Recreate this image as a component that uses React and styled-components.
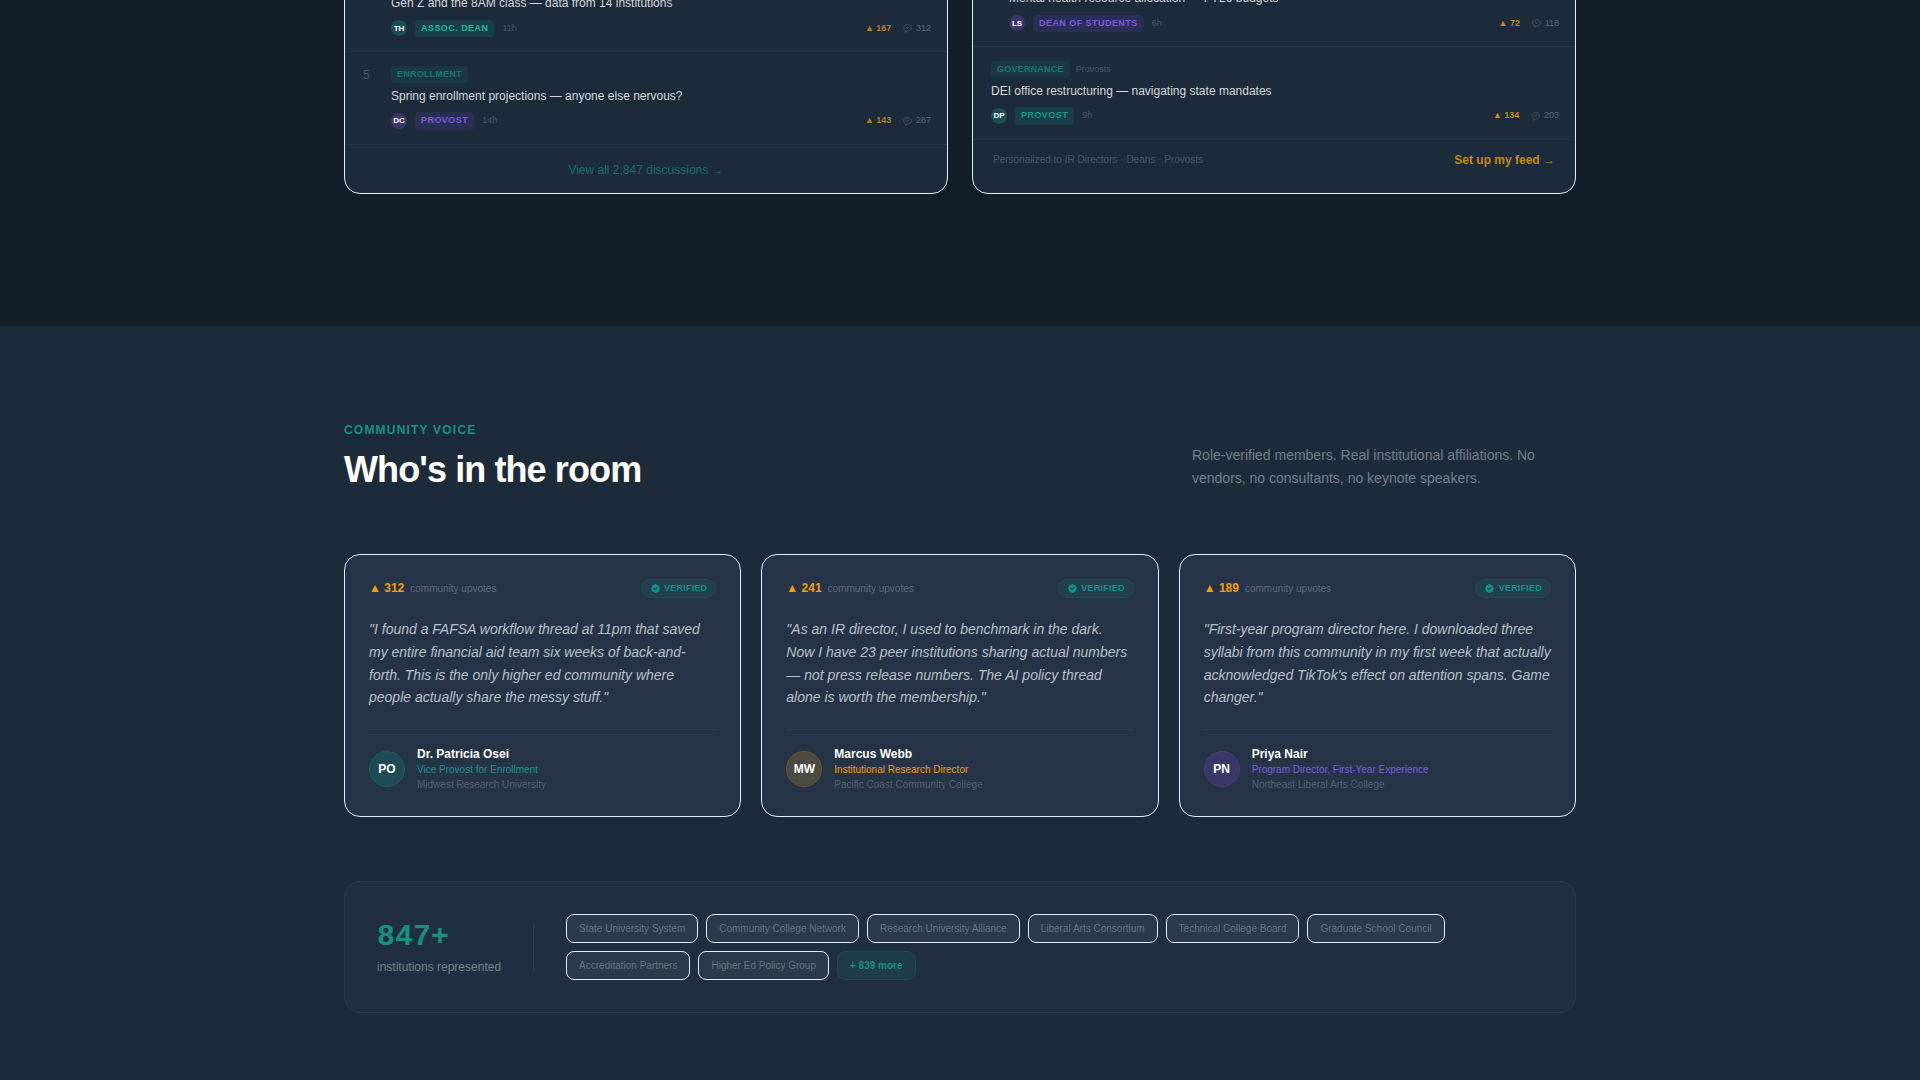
import React from 'react';
import styled, { createGlobalStyle } from 'styled-components';
import { HiBadgeCheck } from 'react-icons/hi';

const GlobalStyle = createGlobalStyle`
  * {
    box-sizing: border-box;
  }

  body {
    margin: 0;
    background: #1c2b39;
    font-family: 'Liberation Sans', Arial, sans-serif;
    color: #fff;
    overflow: hidden;
  }

  p, h2 {
    margin: 0;
  }
`;

const tones = {
  teal: {
    text: '#14988a',
    bright: '#1fb5a0',
    tag: 'rgba(13, 148, 136, 0.19)',
    avatar: '#1d4d55',
    large: '#1e4a55',
    ring: '#1f5c60',
  },
  amber: {
    text: '#f59e0b',
    large: '#4a4a3f',
    ring: '#705628',
  },
  purple: {
    text: '#7c5ce0',
    bright: '#8059e0',
    tag: 'rgba(110, 65, 225, 0.16)',
    avatar: '#3b356b',
    large: '#383765',
    ring: '#453b80',
  },
};

const Page = styled.div`
  height: 1080px;
  overflow: hidden;
`;

const Container = styled.div`
  width: 1232px;
  margin: 0 auto;
`;

const FeedSection = styled.section`
  height: 325.6px;
  background: #111d28;
  overflow: hidden;
`;

const Boards = styled(Container)`
  display: grid;
  grid-template-columns: 1fr 1fr;
  gap: 24px;
  height: 224px;
  margin-top: -30px;
`;

const Board = styled.div`
  display: flex;
  flex-direction: column;
  padding-top: ${({ $top }) => $top}px;
  background: #1c2b39;
  border: 1px solid #e2ecf6;
  border-radius: 16px;
`;

const Row = styled.div`
  display: flex;
  padding: 14px 16px 14px ${({ $indent }) => $indent || 16}px;
  border-bottom: 1px solid #253644;
`;

const Rank = styled.span`
  width: 30px;
  padding-left: 2px;
  font-size: 12px;
  line-height: 18px;
  color: #4a5a68;
`;

const RowBody = styled.div`
  flex: 1;
`;

const TagLine = styled.div`
  display: flex;
  align-items: center;
  gap: 6px;
  height: 17px;
  margin-bottom: 4.5px;
`;

const Topic = styled.span`
  padding: 2px 6px;
  border-radius: 4px;
  background: rgba(13, 148, 136, 0.13);
  color: #16796f;
  font-size: 9px;
  font-weight: 700;
  line-height: 13.5px;
  letter-spacing: 0.025em;
`;

const Muted = styled.span`
  font-size: 9px;
  line-height: 13.5px;
  color: #4b5964;
`;

const RowTitle = styled.p`
  font-size: 12px;
  line-height: 17px;
  margin-bottom: ${({ $tagged }) => ($tagged ? 7.5 : 8)}px;
  color: #d3d8dc;
`;

const Meta = styled.div`
  display: flex;
  align-items: center;
  gap: 8px;
  height: 17.5px;
`;

const SmallAvatar = styled.span`
  display: flex;
  align-items: center;
  justify-content: center;
  width: 16px;
  height: 16px;
  border-radius: 50%;
  background: ${({ $tone }) => tones[$tone].avatar};
  font-size: 8px;
  font-weight: 700;
`;

const Role = styled.span`
  padding: 2px 6px;
  border-radius: 4px;
  background: ${({ $tone }) => tones[$tone].tag};
  color: ${({ $tone, $bright }) => ($bright ? tones[$tone].bright : tones[$tone].text)};
  font-size: 9px;
  font-weight: 700;
  line-height: 13.5px;
  letter-spacing: 0.05em;
`;

const Stats = styled.div`
  display: flex;
  gap: 12px;
  margin-left: auto;
  font-size: 9px;
  line-height: 13.5px;
`;

const Votes = styled.span`
  font-weight: 700;
  color: ${({ $dim }) => ($dim ? '#b08029' : '#c48a1a')};
`;

const Comments = styled.span`
  display: flex;
  align-items: center;
  gap: 3.6px;
  color: #5a6976;
`;

const Bubble = styled.svg`
  width: 9px;
  height: 9px;
  margin-top: 1px;
  fill: none;
  stroke: #4a5965;
  stroke-width: 0.8;
`;

const BoardFooter = styled.div`
  display: flex;
  align-items: center;
  justify-content: ${({ $split }) => ($split ? 'space-between' : 'center')};
  height: ${({ $split }) => ($split ? 41 : 48.5)}px;
  padding: ${({ $split }) => ($split ? 0 : 2)}px 20px 0;
  font-size: 12px;
`;

const ViewAll = styled.span`
  color: #177168;
`;

const FooterNote = styled.span`
  font-size: 10px;
  line-height: 10px;
  color: #4a5863;
`;

const SetUp = styled.span`
  font-weight: 700;
  color: #c48a14;
`;

const VoiceSection = styled.section`
  padding-top: 96px;
`;

const Header = styled.div`
  display: flex;
  align-items: flex-end;
  justify-content: space-between;
  margin-bottom: 64px;
`;

const Eyebrow = styled.p`
  margin-bottom: 12px;
  font-size: 12px;
  line-height: 16px;
  font-weight: 700;
  letter-spacing: 0.1em;
  color: #179282;
`;

const Heading = styled.h2`
  font-size: 36px;
  line-height: 40px;
  font-weight: 700;
  letter-spacing: -0.025em;
`;

const Intro = styled.p`
  width: 384px;
  font-size: 14px;
  line-height: 22.75px;
  color: #74808a;
`;

const Cards = styled.div`
  display: grid;
  grid-template-columns: repeat(3, 1fr);
  gap: 20px;
  margin-bottom: 64px;
`;

const Card = styled.div`
  padding: 24px;
  background: #243446;
  border: 1px solid #e2ecf6;
  border-radius: 16px;
`;

const CardTop = styled.div`
  display: flex;
  align-items: center;
  gap: 6px;
  height: 19.5px;
  margin-bottom: 20px;
`;

const Upvotes = styled.span`
  font-size: 12px;
  font-weight: 700;
  color: #f59e0b;
`;

const UpvoteLabel = styled.span`
  font-size: 10px;
  color: #5f6d7c;
`;

const Verified = styled.span`
  display: flex;
  align-items: center;
  gap: 3.5px;
  margin-left: auto;
  padding: 2px 8px;
  border: 1px solid #204d4f;
  border-radius: 999px;
  background: #213f4d;
  color: #13948a;
  font-size: 9px;
  font-weight: 700;
  line-height: 13.5px;
  letter-spacing: 0.025em;
`;

const Quote = styled.p`
  margin-bottom: 20px;
  font-size: 14px;
  font-style: italic;
  line-height: 22.75px;
  color: #b9c0c7;
`;

const Author = styled.div`
  display: flex;
  align-items: center;
  gap: 12px;
  padding-top: 16.8px;
  border-top: 1px solid #2d3e50;
`;

const Avatar = styled.span`
  display: flex;
  align-items: center;
  justify-content: center;
  width: 36px;
  height: 36px;
  border: 1px solid ${({ $tone }) => tones[$tone].ring};
  border-radius: 50%;
  background: ${({ $tone }) => tones[$tone].large};
  font-size: 12px;
  font-weight: 700;
`;

const Name = styled.p`
  font-size: 12px;
  font-weight: 700;
  line-height: 15px;
`;

const JobTitle = styled.p`
  font-size: 10px;
  line-height: 15px;
  color: ${({ $tone }) => tones[$tone].text};
`;

const School = styled.p`
  font-size: 10px;
  line-height: 15px;
  color: #526170;
`;

const Strip = styled.div`
  display: flex;
  align-items: center;
  gap: 32px;
  padding: 32px;
  background: #1f2f3f;
  border: 1px solid #293a48;
  border-radius: 16px;
`;

const Count = styled.p`
  margin-bottom: 4px;
  font-family: 'Liberation Mono', monospace;
  font-size: 30px;
  font-weight: 700;
  line-height: 36px;
  color: #16917f;
`;

const CountLabel = styled.p`
  font-size: 12px;
  line-height: 16px;
  color: #77838d;
`;

const Divider = styled.div`
  width: 1px;
  height: 48px;
  background: #2b3c4b;
`;

const Chips = styled.div`
  display: flex;
  flex: 1;
  flex-wrap: wrap;
  gap: 8px;
`;

const Chip = styled.span`
  padding: 6px 12px;
  border: 1px solid ${({ $more }) => ($more ? '#1b4b50' : '#e2ecf6')};
  border-radius: 8px;
  background: ${({ $more }) => ($more ? '#1d3c47' : '#2a3a48')};
  color: ${({ $more }) => ($more ? '#159284' : '#687580')};
  font-size: 10px;
  font-weight: ${({ $more }) => ($more ? 700 : 400)};
  line-height: 15px;
`;

const trending = [
  {
    title: 'Gen Z and the 8AM class — data from 14 institutions',
    initials: 'TH',
    tone: 'teal',
    bright: true,
    role: 'ASSOC. DEAN',
    time: '11h',
    votes: 167,
    comments: 312,
  },
  {
    rank: 5,
    topic: 'ENROLLMENT',
    title: 'Spring enrollment projections — anyone else nervous?',
    initials: 'DC',
    tone: 'purple',
    role: 'PROVOST',
    time: '14h',
    votes: 143,
    comments: 287,
  },
];

const personal = [
  {
    title: 'Mental health resource allocation — FY26 budgets',
    initials: 'LS',
    tone: 'purple',
    bright: true,
    role: 'DEAN OF STUDENTS',
    time: '6h',
    votes: 72,
    comments: 118,
    indent: 36,
  },
  {
    topic: 'GOVERNANCE',
    audience: 'Provosts',
    title: 'DEI office restructuring — navigating state mandates',
    initials: 'DP',
    tone: 'teal',
    role: 'PROVOST',
    time: '9h',
    votes: 134,
    comments: 203,
    indent: 18,
  },
];

const testimonials = [
  {
    votes: 312,
    quote:
      '"I found a FAFSA workflow thread at 11pm that saved my entire financial aid team six weeks of back-and-forth. This is the only higher ed community where people actually share the messy stuff."',
    initials: 'PO',
    name: 'Dr. Patricia Osei',
    title: 'Vice Provost for Enrollment',
    school: 'Midwest Research University',
    tone: 'teal',
  },
  {
    votes: 241,
    quote:
      '"As an IR director, I used to benchmark in the dark. Now I have 23 peer institutions sharing actual numbers — not press release numbers. The AI policy thread alone is worth the membership."',
    initials: 'MW',
    name: 'Marcus Webb',
    title: 'Institutional Research Director',
    school: 'Pacific Coast Community College',
    tone: 'amber',
  },
  {
    votes: 189,
    quote:
      '"First-year program director here. I downloaded three syllabi from this community in my first week that actually acknowledged TikTok\'s effect on attention spans. Game changer."',
    initials: 'PN',
    name: 'Priya Nair',
    title: 'Program Director, First-Year Experience',
    school: 'Northeast Liberal Arts College',
    tone: 'purple',
  },
];

const institutions = [
  'State University System',
  'Community College Network',
  'Research University Alliance',
  'Liberal Arts Consortium',
  'Technical College Board',
  'Graduate School Council',
  'Accreditation Partners',
  'Higher Ed Policy Group',
];

const BubbleIcon = () => (
  <Bubble viewBox="0 0 9 9">
    <path d="M2.4 0.9H6.4L8.2 2.4V5.2L6.6 6.9H4.2L2.4 8.3V6.7L0.8 5.2V2.4Z" />
    <path d="M2.8 3.2H4.4M3.6 5.2L6.2 2.8" />
  </Bubble>
);

const FeedRow = ({ item, ranked }) => (
  <Row $indent={item.indent}>
    {ranked && <Rank>{item.rank}</Rank>}
    <RowBody>
      {item.topic && (
        <TagLine>
          <Topic>{item.topic}</Topic>
          {item.audience && <Muted>{item.audience}</Muted>}
        </TagLine>
      )}
      <RowTitle $tagged={!!item.topic}>{item.title}</RowTitle>
      <Meta>
        <SmallAvatar $tone={item.tone}>{item.initials}</SmallAvatar>
        <Role $tone={item.tone} $bright={item.bright}>{item.role}</Role>
        <Muted>{item.time}</Muted>
        <Stats>
          <Votes $dim={ranked}>▲ {item.votes}</Votes>
          <Comments>
            <BubbleIcon />
            {item.comments}
          </Comments>
        </Stats>
      </Meta>
    </RowBody>
  </Row>
);

const Testimonial = ({ item }) => (
  <Card>
    <CardTop>
      <Upvotes>▲ {item.votes}</Upvotes>
      <UpvoteLabel>community upvotes</UpvoteLabel>
      <Verified>
        <HiBadgeCheck size={11} />
        VERIFIED
      </Verified>
    </CardTop>
    <Quote>{item.quote}</Quote>
    <Author>
      <Avatar $tone={item.tone}>{item.initials}</Avatar>
      <div>
        <Name>{item.name}</Name>
        <JobTitle $tone={item.tone}>{item.title}</JobTitle>
        <School>{item.school}</School>
      </div>
    </Author>
  </Card>
);

const App = () => {
  return (
    <Page>
      <GlobalStyle />
      <FeedSection>
        <Boards>
          <Board $top={9.5}>
            {trending.map((item) => (
              <FeedRow key={item.title} item={item} ranked />
            ))}
            <BoardFooter>
              <ViewAll>View all 2,847 discussions →</ViewAll>
            </BoardFooter>
          </Board>
          <Board $top={4.5}>
            {personal.map((item) => (
              <FeedRow key={item.title} item={item} />
            ))}
            <BoardFooter $split>
              <FooterNote>Personalized to IR Directors · Deans · Provosts</FooterNote>
              <SetUp>Set up my feed →</SetUp>
            </BoardFooter>
          </Board>
        </Boards>
      </FeedSection>
      <VoiceSection>
        <Container>
          <Header>
            <div>
              <Eyebrow>COMMUNITY VOICE</Eyebrow>
              <Heading>Who's in the room</Heading>
            </div>
            <Intro>
              Role-verified members. Real institutional affiliations. No vendors, no consultants, no keynote speakers.
            </Intro>
          </Header>
          <Cards>
            {testimonials.map((item) => (
              <Testimonial key={item.name} item={item} />
            ))}
          </Cards>
          <Strip>
            <div>
              <Count>847+</Count>
              <CountLabel>institutions represented</CountLabel>
            </div>
            <Divider />
            <Chips>
              {institutions.map((name) => (
                <Chip key={name}>{name}</Chip>
              ))}
              <Chip $more>+ 839 more</Chip>
            </Chips>
          </Strip>
        </Container>
      </VoiceSection>
    </Page>
  );
};

export default App;
